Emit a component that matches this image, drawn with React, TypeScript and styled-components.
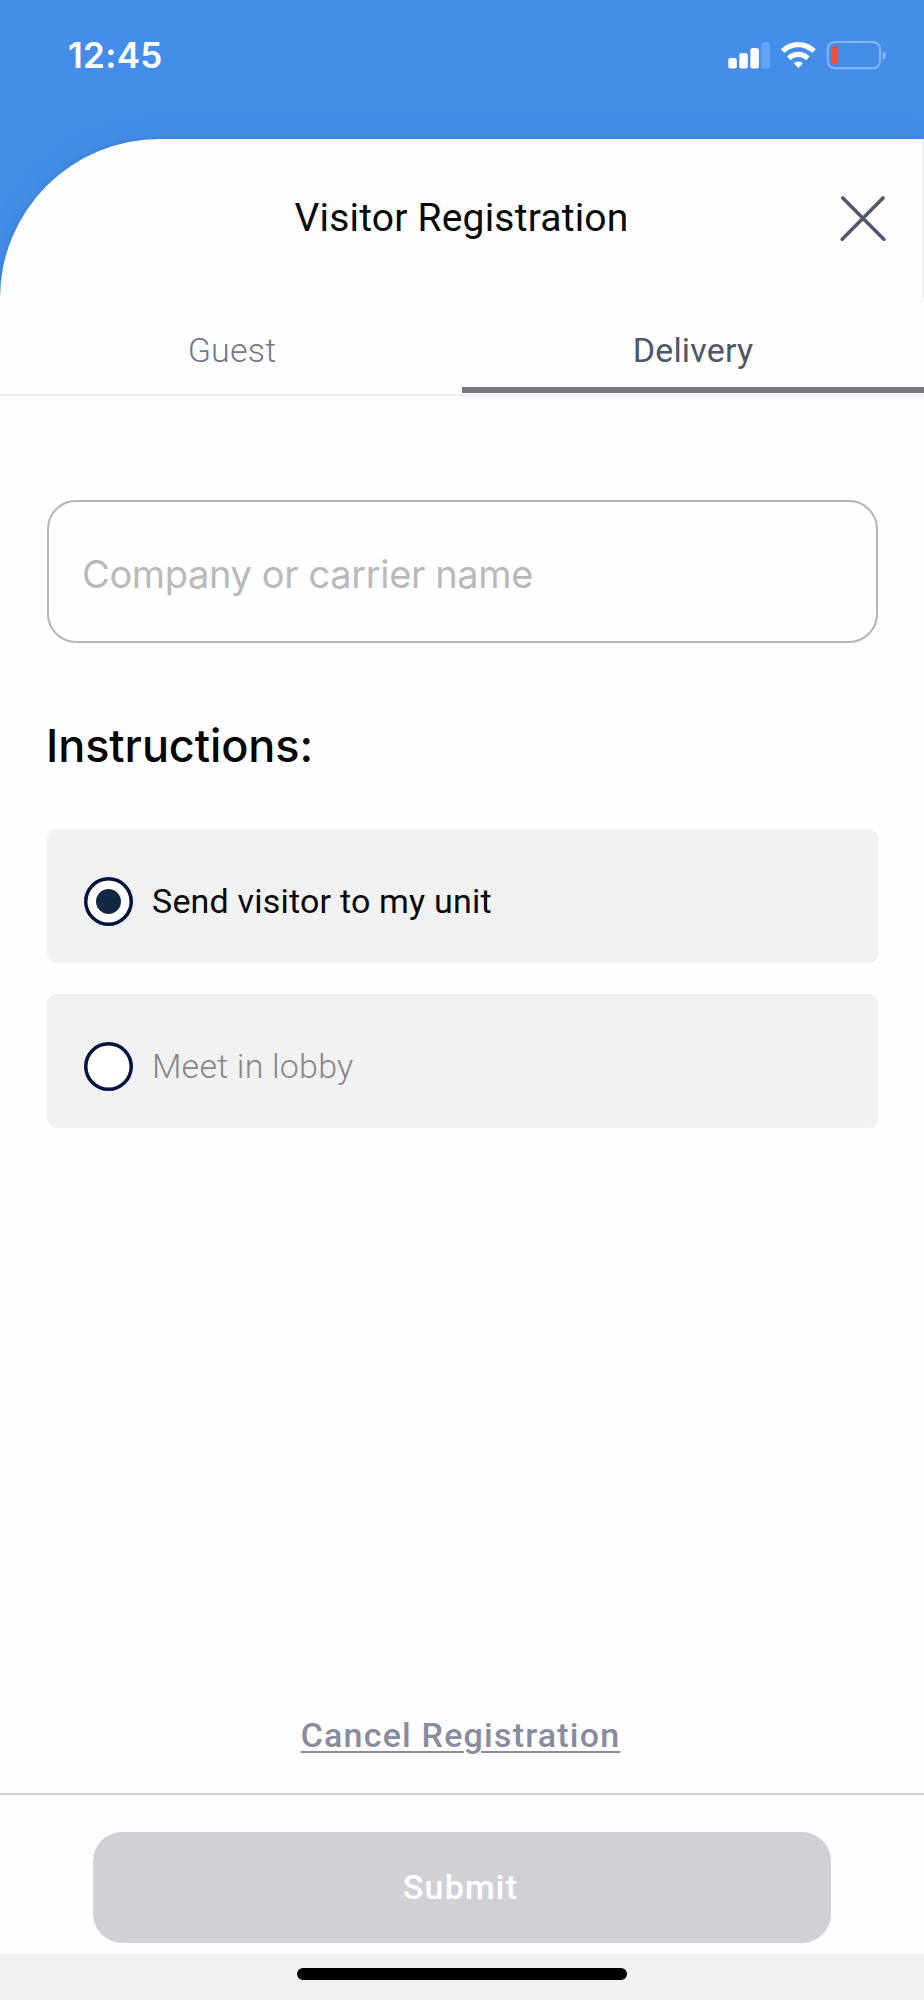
import React, { useState } from "react";
import styled, { createGlobalStyle } from "styled-components";

const GlobalStyle = createGlobalStyle`
  *, *::before, *::after { box-sizing: border-box; }
  body { margin: 0; background: #fefefe; font-family: Roboto, sans-serif; }
  button, input { font: inherit; }
`;

const Screen = styled.div`
  width: 924px;
  height: 2000px;
  display: flex;
  flex-direction: column;
  overflow: hidden;
  background: #fefefe;
`;

const Top = styled.div`
  height: 298px;
  flex: none;
  background: #448eea;
`;

const StatusBar = styled.div`
  height: 139px;
  display: flex;
  justify-content: space-between;
  align-items: flex-start;
  padding: 33px 37px 0 68px;
`;

const Clock = styled.span`
  font: 600 35px/44px Inter, sans-serif;
  letter-spacing: 0.3px;
  color: #fff;
`;

const StatusIcons = styled.svg`
  display: block;
  margin-top: 7px;
`;

const Header = styled.header`
  height: 159px;
  display: flex;
  align-items: center;
  justify-content: space-between;
  padding: 0 37px 0 83px;
  border-top-left-radius: 160px 159px;
  border-right: 1px solid #d9e8f8;
  background: #fefefe;
  box-shadow: 0 0 22px rgba(50, 80, 130, 0.22), 0 0 2px #1f7fe4;
  clip-path: inset(-30px 0 0 0);
`;

const Title = styled.h1`
  flex: 1;
  margin: 0;
  padding-bottom: 1px;
  text-align: center;
  font-weight: 400;
  font-size: 39px;
  line-height: 46px;
  letter-spacing: 0.2px;
  color: #080808;
`;

const CloseButton = styled.button`
  width: 46px;
  height: 46px;
  padding: 0;
  border: 0;
  background: none;
  svg { display: block; }
`;

const Tabs = styled.div`
  height: 98px;
  flex: none;
  display: flex;
  border-bottom: 2px solid #efefef;
`;

const Tab = styled.button<{ $active: boolean }>`
  width: 50%;
  height: 95px;
  padding: 14px 0 0 ${(p) => (p.$active ? 0 : 2)}px;
  border: 0;
  border-bottom: 6px solid ${(p) => (p.$active ? "#77777c" : "transparent")};
  background: none;
  color: ${(p) => (p.$active ? "#50566a" : "#737887")};
  font-size: 34px;
  font-weight: ${(p) => (p.$active ? 400 : 300)};
  line-height: 40px;
  letter-spacing: 0.2px;
`;

const Form = styled.main`
  flex: 1;
  display: flex;
  flex-direction: column;
  padding: 104px 46px 0 47px;
`;

const NameInput = styled.input`
  width: 100%;
  height: 143px;
  padding: 4px 33px 0;
  border: 2px solid #b5b5b5;
  border-radius: 29px;
  background: transparent;
  font: 400 38px/46px Inter, sans-serif;
  letter-spacing: -0.36px;
  color: #111;
  outline: 0;
  &::placeholder { color: #b9b9b9; opacity: 1; }
`;

const SectionTitle = styled.h2`
  margin: 75px 0 0 -1px;
  font: 500 45px/56px Inter, sans-serif;
  letter-spacing: -0.08px;
  color: #050505;
`;

const Options = styled.div`
  display: flex;
  flex-direction: column;
  gap: 31px;
  margin-top: 55px;
`;

const Option = styled.button<{ $selected: boolean }>`
  height: 134px;
  display: flex;
  align-items: center;
  gap: 19px;
  padding: 11px 37px 0;
  border: 0;
  border-radius: 9px;
  background: #f1f1f1;
  text-align: left;
  color: ${(p) => (p.$selected ? "#080808" : "#87878a")};
  font-size: 34px;
  font-weight: ${(p) => (p.$selected ? 400 : 300)};
  line-height: 40px;
  letter-spacing: 0.2px;
`;

const OptionLabel = styled.span`
  padding-bottom: 1px;
`;

const Radio = styled.span`
  width: 49px;
  height: 49px;
  flex: none;
  display: grid;
  place-items: center;
  border-radius: 50%;
  background: #fff;
  box-shadow: inset 0 0 0 3.5px #03143d;
`;

const RadioDot = styled.span`
  width: 25px;
  height: 25px;
  border-radius: 50%;
  background: #122945;
`;

const CancelButton = styled.button`
  align-self: center;
  margin: auto 4px 38px 0;
  padding: 0;
  border: 0;
  background: none;
  color: #898b9f;
  font-size: 34px;
  font-weight: 500;
  line-height: 40px;
  letter-spacing: 1.2px;
  text-decoration: underline;
  text-decoration-thickness: 2px;
  text-underline-offset: 4px;
`;

const Footer = styled.footer`
  height: 160px;
  flex: none;
  padding: 37px 93px 0;
  border-top: 2px solid #d0d0d0;
`;

const SubmitButton = styled.button`
  width: 100%;
  height: 111px;
  padding: 0 3px 2px 0;
  border: 0;
  border-radius: 29px;
  background: #d0d1d7;
  color: #fff;
  font-size: 34px;
  font-weight: 500;
  letter-spacing: 1.25px;
`;

const HomeArea = styled.div`
  height: 47px;
  flex: none;
  display: flex;
  justify-content: center;
  padding-top: 15px;
  background: #f1f1f1;
`;

const HomeBar = styled.div`
  width: 330px;
  height: 12px;
  border-radius: 6px;
  background: #000;
`;

const destinations = ["Send visitor to my unit", "Meet in lobby"];
const tabs = ["Guest", "Delivery"];

export default function App() {
  const [tab, setTab] = useState("Delivery");
  const [destination, setDestination] = useState(destinations[0]);

  return (
    <>
      <GlobalStyle />
      <Screen>
        <Top>
          <StatusBar>
            <Clock>12:45</Clock>
            <StatusIcons width="160" height="30" viewBox="727 40 160 30" fill="none">
              <g fill="#fff">
                <rect x="728.3" y="58" width="8.5" height="10.5" rx="2.2" />
                <rect x="739.3" y="53" width="8.5" height="15.5" rx="2.2" />
                <rect x="750.4" y="48" width="8.5" height="20.5" rx="2.2" />
                <rect x="761.4" y="42.3" width="8.5" height="26.2" rx="2.2" fill="#62a4f0" />
              </g>
              <g stroke="#fff" strokeWidth="5.2">
                <path d="M782.7 51.2a22 22 0 0 1 31.2 0" />
                <path d="M788.8 58.3a13.6 13.6 0 0 1 19 0" />
              </g>
              <path d="M793.7 63.2a6.8 6.8 0 0 1 9.2 0l-4.6 4.7z" fill="#fff" />
              <rect x="827.8" y="42" width="52.2" height="26.3" rx="7" stroke="#86b7f3" strokeWidth="2" />
              <path d="M882.6 51.5c4.6 1.4 4.6 7.2 0 8.6z" fill="#86b7f3" />
              <rect x="831.4" y="46" width="6.8" height="18.5" rx="2.4" fill="#f44d35" />
            </StatusIcons>
          </StatusBar>
          <Header>
            <Title>Visitor Registration</Title>
            <CloseButton aria-label="Close">
              <svg width="46" height="46" viewBox="0 0 46 46" stroke="#53586b" strokeWidth="3.6" strokeLinecap="round">
                <path d="M2.8 2l41 41.2M43 2L2.2 43.2" />
              </svg>
            </CloseButton>
          </Header>
        </Top>
        <Tabs>
          {tabs.map((name) => (
            <Tab key={name} $active={name === tab} onClick={() => setTab(name)}>
              {name}
            </Tab>
          ))}
        </Tabs>
        <Form>
          <NameInput placeholder="Company or carrier name" />
          <SectionTitle>Instructions:</SectionTitle>
          <Options>
            {destinations.map((name) => (
              <Option key={name} $selected={name === destination} onClick={() => setDestination(name)}>
                <Radio>{name === destination && <RadioDot />}</Radio>
                <OptionLabel>{name}</OptionLabel>
              </Option>
            ))}
          </Options>
          <CancelButton>Cancel Registration</CancelButton>
        </Form>
        <Footer>
          <SubmitButton>Submit</SubmitButton>
        </Footer>
        <HomeArea>
          <HomeBar />
        </HomeArea>
      </Screen>
    </>
  );
}
